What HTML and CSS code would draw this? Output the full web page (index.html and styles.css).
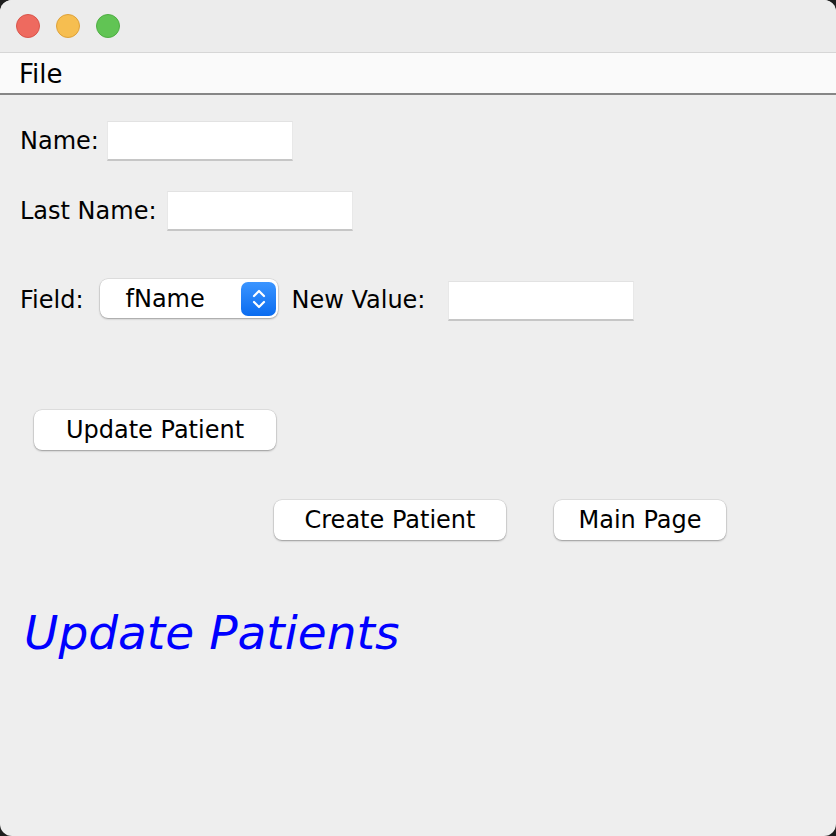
FILE: index.html
```html
<!DOCTYPE html>
<html>
<head>
<meta charset="utf-8">
<link rel="stylesheet" href="styles.css">
</head>
<body>
<div class="window">
  <div class="titlebar">
    <span class="light red"></span>
    <span class="light yellow"></span>
    <span class="light green"></span>
  </div>
  <div class="menubar"><span class="menu-item">File</span></div>
  <div class="content">
    <div class="row row-name">
      <span class="label">Name:</span>
      <span class="field gap-name"></span>
    </div>
    <div class="row row-last">
      <span class="label">Last Name:</span>
      <span class="field gap-last"></span>
    </div>
    <div class="row row-field">
      <span class="label">Field:</span>
      <span class="combo">
        <span class="combo-text">fName</span>
        <span class="stepper">
          <svg width="22" height="26" viewBox="0 0 22 26">
            <path d="M6 10 L11 5 L16 10" fill="none" stroke="#fff" stroke-width="2.2" stroke-linecap="round" stroke-linejoin="round"/>
            <path d="M6 16 L11 21 L16 16" fill="none" stroke="#fff" stroke-width="2.2" stroke-linecap="round" stroke-linejoin="round"/>
          </svg>
        </span>
      </span>
      <span class="label label-new">New Value:</span>
      <span class="field field-new"></span>
    </div>
    <div class="row row-update">
      <span class="button btn-update">Update Patient</span>
    </div>
    <div class="row row-buttons">
      <span class="button btn-create">Create Patient</span>
      <span class="button btn-main">Main Page</span>
    </div>
    <div class="title">Update Patients</div>
  </div>
</div>
</body>
</html>
```

FILE: styles.css
```css
html, body {
  margin: 0;
  padding: 0;
  background: #1e1e1e;
}
body {
  width: 836px;
  height: 836px;
  overflow: hidden;
  font-family: "DejaVu Sans", "Liberation Sans", sans-serif;
  color: #000;
}
.window {
  width: 836px;
  height: 836px;
  background: #eeeeee;
  border-radius: 12px;
  overflow: hidden;
}
.titlebar {
  height: 52px;
  background: #ececec;
  border-bottom: 1px solid #d6d6d6;
  display: flex;
  align-items: center;
  padding-left: 16px;
  gap: 16px;
}
.light {
  width: 24px;
  height: 24px;
  border-radius: 50%;
  box-sizing: border-box;
}
.red { background: #ee6a5f; border: 1px solid #d9554b; }
.yellow { background: #f6be50; border: 1px solid #dea23a; }
.green { background: #61c454; border: 1px solid #4fae43; }
.menubar {
  height: 40px;
  background: #fafafa;
  border-bottom: 2px solid #868686;
  display: flex;
  align-items: center;
  padding-left: 19px;
}
.menu-item {
  font-size: 26px;
  line-height: 40px;
  padding-top: 2px;
}
.content {
  padding-left: 20px;
  display: flex;
  flex-direction: column;
  align-items: flex-start;
}
.row {
  display: flex;
  align-items: center;
}
.label {
  font-size: 24px;
  line-height: 40px;
}
.field {
  width: 186px;
  height: 40px;
  background: #fff;
  box-sizing: border-box;
  border-top: 1px solid #e2e2e2;
  border-left: 1px solid #e8e8e8;
  border-right: 1px solid #e8e8e8;
  border-bottom: 2px solid #c6c6c6;
}
.gap-name { margin-left: 8px; }
.gap-last { margin-left: 10px; }
.row-name { margin-top: 26px; }
.row-last { margin-top: 30px; }
.row-field { margin-top: 48px; height: 42px; }
.combo {
  margin-left: 17px;
  width: 178px;
  height: 39px;
  background: #fff;
  border-radius: 8px;
  box-shadow: 0 1px 2px rgba(0,0,0,0.3), 0 0 0 0.5px rgba(0,0,0,0.12);
  display: flex;
  align-items: center;
  justify-content: space-between;
  box-sizing: border-box;
  padding: 0 2px 0 25px;
  margin-top: -3px;
}
.combo-text {
  font-size: 24px;
}
.stepper {
  width: 35px;
  height: 34px;
  border-radius: 7px;
  background: linear-gradient(#3b95ff, #0a6cf0);
  display: flex;
  align-items: center;
  justify-content: center;
}
.label-new { margin-left: 13px; }
.field-new { margin-left: 23px; margin-top: 2px; }
.button {
  height: 40px;
  background: #fff;
  border-radius: 8px;
  box-shadow: 0 1px 2px rgba(0,0,0,0.32), 0 0 0 0.5px rgba(0,0,0,0.12);
  font-size: 24px;
  line-height: 40px;
  text-align: center;
  box-sizing: border-box;
}
.row-update { margin-top: 89px; margin-left: 14px; }
.btn-update { width: 242px; }
.row-buttons { margin-top: 50px; margin-left: 254px; gap: 48px; }
.btn-create { width: 232px; }
.btn-main { width: 172px; }
.title {
  margin-top: 63px;
  margin-left: 4px;
  font-size: 47px;
  font-style: italic;
  color: #0000ff;
  line-height: 60px;
}
```
